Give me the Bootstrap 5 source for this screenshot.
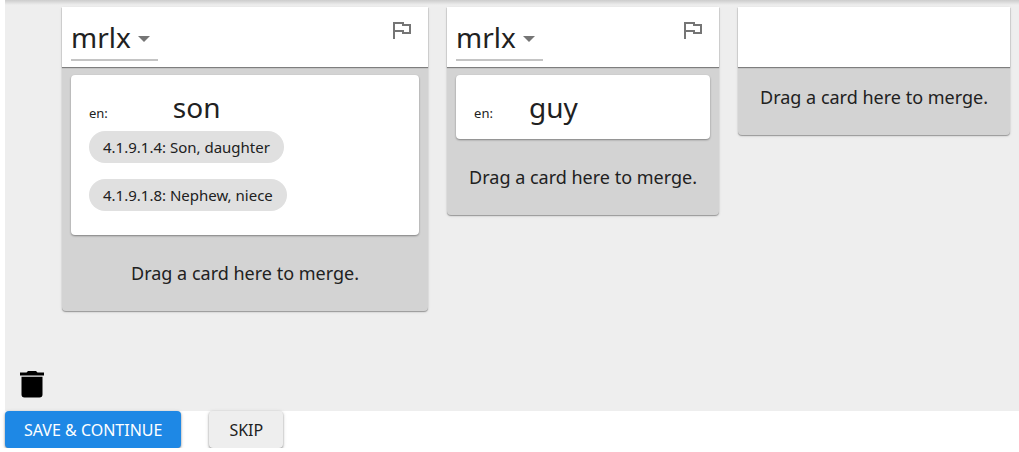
<!DOCTYPE html>
<html lang="en">
<head>
<meta charset="utf-8">
<meta name="viewport" content="width=device-width, initial-scale=1">
<title>Merge duplicates</title>
<link href="https://cdn.jsdelivr.net/npm/bootstrap@5.3.0/dist/css/bootstrap.min.css" rel="stylesheet">
<style>
body { font-family: "Noto Sans", sans-serif; color: #212121; background: #fff; }
.page { padding-left: 5px; }
.board { background: linear-gradient(#ccc, #eee 5px); min-height: 411px; padding: 7px 9px 0 0; }
.trash-cell { width: 57px; padding: 0 0 11px 11px; }
.words { display: grid; grid-template-columns: 35fr 26fr 26fr; gap: 19px; align-items: start; }
.word { background: #d3d3d3; border-radius: 0 0 4px 4px; box-shadow: 0 1px 1px rgba(0,0,0,.3), 0 1px 3px rgba(0,0,0,.12); }
.word-head { background: #fff; height: 60px; padding: 0 9px; box-shadow: 0 1px 1px rgba(0,0,0,.4); }
.vern-wrap { position: relative; width: 87px; }
.vern { appearance: none; width: 100%; height: 54px; padding: 7px 0 0; border: 0; border-bottom: 2px solid #c4c4c4; border-radius: 0; background: transparent; font-size: 28px; line-height: 40px; color: #212121; }
.vern-wrap svg { position: absolute; right: 8px; top: 29px; pointer-events: none; }
.flag { margin: 14px 7px 0 0; }
.sense { background: #fff; border-radius: 4px; margin: 8px 9px; padding: 14px 18px 0; box-shadow: 0 1px 2px rgba(0,0,0,.4); }
.gloss-lang { font-size: 13px; line-height: 20px; }
.gloss { font-size: 28px; line-height: 36px; }
.gloss-row { height: 42px; }
.gap-wide { gap: 65px; }
.gap-tight { gap: 36px; }
.sense-short { padding-bottom: 8px; }
.sense-tall { padding-bottom: 24px; }
.domain { background: #e0e0e0; border-radius: 16px; padding: 0 14px; font-size: 15px; line-height: 32px; }
.drop { font-size: 18px; line-height: 24px; padding: 18px 0 26px; white-space: nowrap; }
.act { font-size: 16px; line-height: 24px; min-height: 37px; padding: 6px 19px; border: 0; border-radius: 4px; box-shadow: 0 1px 2px rgba(0,0,0,.4), 0 1px 4px rgba(0,0,0,.15); }
.act-save, .act-save:hover { background: #1e88e5; color: #fff; }
.act-skip, .act-skip:hover { background: #eee; color: #212121; padding: 6px 20px; }
.act-row { gap: 28px; }
</style>
</head>
<body>
<main class="page">
  <div class="board d-flex">
    <div class="trash-cell d-flex align-items-end flex-shrink-0">
      <svg width="32" height="32" viewBox="0 0 32 32" role="img" aria-label="Trash"><path d="M5.500 9h21v17.500q0 3-3 3h-15q-3 0-3-3zM4 4.500h6.500L12 3h8l1.500 1.500H28v3H4z"/><path fill="#b0b0b0" d="M5.500 8h21v1h-21z"/></svg>
    </div>
    <div class="words flex-grow-1">
      <section class="word">
        <div class="word-head d-flex justify-content-between align-items-start">
          <div class="vern-wrap"><select class="vern" aria-label="Vernacular"><option>mrlx</option></select>
            <svg width="12" height="6" viewBox="0 0 12 6"><path fill="#757575" d="M0 0h12L6 6z"/></svg></div>
          <button class="flag btn p-0 border-0 lh-1" type="button" aria-label="Flag"><svg class="d-block" width="20" height="19" viewBox="0 0 20 19"><path fill="none" stroke="#757575" stroke-width="2" d="M2 18V2h9v2h7v8h-7v-2H2"/></svg></button>
        </div>
        <article class="sense sense-tall">
          <div class="gloss-row d-flex align-items-baseline gap-wide"><span class="gloss-lang">en:</span><span class="gloss">son</span></div>
          <div class="d-flex flex-column align-items-start gap-3"><span class="domain">4.1.9.1.4: Son, daughter</span><span class="domain">4.1.9.1.8: Nephew, niece</span></div>
        </article>
        <div class="drop text-center">Drag a card here to merge.</div>
      </section>
      <section class="word">
        <div class="word-head d-flex justify-content-between align-items-start">
          <div class="vern-wrap"><select class="vern" aria-label="Vernacular"><option>mrlx</option></select>
            <svg width="12" height="6" viewBox="0 0 12 6"><path fill="#757575" d="M0 0h12L6 6z"/></svg></div>
          <button class="flag btn p-0 border-0 lh-1" type="button" aria-label="Flag"><svg class="d-block" width="20" height="19" viewBox="0 0 20 19"><path fill="none" stroke="#757575" stroke-width="2" d="M2 18V2h9v2h7v8h-7v-2H2"/></svg></button>
        </div>
        <article class="sense sense-short">
          <div class="gloss-row d-flex align-items-baseline gap-tight"><span class="gloss-lang">en:</span><span class="gloss">guy</span></div>
        </article>
        <div class="drop text-center">Drag a card here to merge.</div>
      </section>
      <section class="word">
        <div class="word-head"></div>
        <div class="drop text-center">Drag a card here to merge.</div>
      </section>
    </div>
  </div>
  <div class="act-row d-flex">
    <button class="btn act act-save" type="button">SAVE &amp; CONTINUE</button>
    <button class="btn act act-skip" type="button">SKIP</button>
  </div>
</main>
<script src="https://cdn.jsdelivr.net/npm/bootstrap@5.3.0/dist/js/bootstrap.bundle.min.js"></script>
</body>
</html>
